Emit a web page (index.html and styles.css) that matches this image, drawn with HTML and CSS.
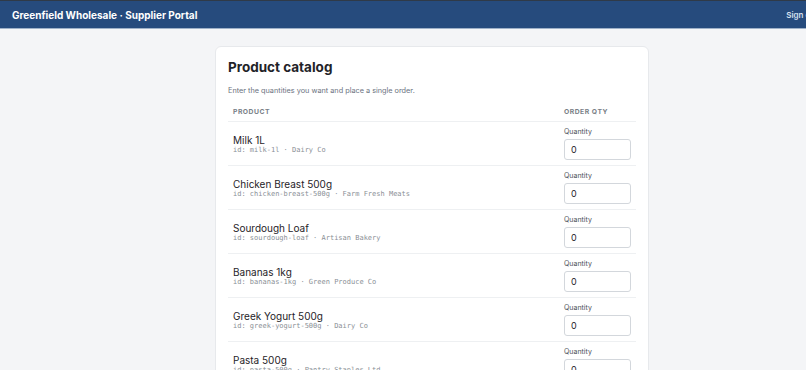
FILE: index.html
```html
<!DOCTYPE html>
<html lang="en">
<head>
  <meta charset="UTF-8">
  <title>Supplier Portal</title>
  <link rel="stylesheet" href="styles.css">
</head>
<body>

  <header class="topbar">
    <div class="topbar-inner">
      <span class="brand">Greenfield Wholesale · Supplier Portal</span>
      <a class="signout" href="#">Sign out</a>
    </div>
  </header>

  <main class="card">
    <h1>Product catalog</h1>
    <p class="hint">Enter the quantities you want and place a single order.</p>

    <table class="catalog">
      <thead>
        <tr>
          <th>Product</th>
          <th class="qty-col">Order qty</th>
        </tr>
      </thead>
      <tbody>
        <tr>
          <td>
            <div class="name">Milk 1L</div>
            <div class="meta">id: milk-1l · Dairy Co</div>
          </td>
          <td class="qty-col">
            <label>Quantity<input type="number" value="0"></label>
          </td>
        </tr>
        <tr>
          <td>
            <div class="name">Chicken Breast 500g</div>
            <div class="meta">id: chicken-breast-500g · Farm Fresh Meats</div>
          </td>
          <td class="qty-col">
            <label>Quantity<input type="number" value="0"></label>
          </td>
        </tr>
        <tr>
          <td>
            <div class="name">Sourdough Loaf</div>
            <div class="meta">id: sourdough-loaf · Artisan Bakery</div>
          </td>
          <td class="qty-col">
            <label>Quantity<input type="number" value="0"></label>
          </td>
        </tr>
        <tr>
          <td>
            <div class="name">Bananas 1kg</div>
            <div class="meta">id: bananas-1kg · Green Produce Co</div>
          </td>
          <td class="qty-col">
            <label>Quantity<input type="number" value="0"></label>
          </td>
        </tr>
        <tr>
          <td>
            <div class="name">Greek Yogurt 500g</div>
            <div class="meta">id: greek-yogurt-500g · Dairy Co</div>
          </td>
          <td class="qty-col">
            <label>Quantity<input type="number" value="0"></label>
          </td>
        </tr>
        <tr>
          <td>
            <div class="name">Pasta 500g</div>
            <div class="meta">id: pasta-500g · Pantry Staples Ltd</div>
          </td>
          <td class="qty-col">
            <label>Quantity<input type="number" value="0"></label>
          </td>
        </tr>
      </tbody>
    </table>
  </main>

</body>
</html>
```

FILE: styles.css
```css
html, body {
  overflow: hidden;
}

body {
  margin: 0;
  font-family: Inter, "Liberation Sans", sans-serif;
  background: #f4f5f7;
  color: #1f2328;
}

.topbar {
  background: #264b7d;
  border-top: 1px solid #2f3a48;
  border-bottom: 1px solid #9fb1c8;
  height: 27px;
  overflow: hidden;
}

.topbar-inner {
  width: 830px;
  height: 27px;
  box-sizing: border-box;
  padding: 0 12px;
  display: flex;
  justify-content: space-between;
  align-items: center;
}

.brand {
  color: #fff;
  font-weight: 700;
  font-size: 10px;
}

.signout {
  color: #d7e1ee;
  font-size: 8px;
  font-weight: 600;
  text-decoration: none;
}

.card {
  width: 408px;
  margin: 17px 0 0 215px;
  padding: 10px 12px 20px;
  background: #fff;
  border: 1px solid #e7e9ec;
  border-radius: 6px;
}

.card h1 {
  margin: 0;
  font-size: 13.5px;
  font-weight: 700;
  line-height: 20px;
}

.hint {
  margin: 9px 0 8px;
  font-size: 7.3px;
  line-height: 9px;
  color: #6b7280;
}

.catalog {
  width: 100%;
  border-collapse: collapse;
}

.catalog th {
  text-align: left;
  font-size: 6.8px;
  font-weight: 700;
  letter-spacing: 0.5px;
  text-transform: uppercase;
  color: #7a7f87;
  padding: 4px 5px 5px;
  border-bottom: 1px solid #eef0f2;
}

.catalog td {
  padding: 6px 5px 5px;
  border-bottom: 1px solid #eef0f2;
  height: 32px;
}

.qty-col {
  width: 67px;
}

.catalog th.qty-col {
  padding-left: 0;
}

.name {
  font-size: 10px;
  line-height: 11px;
  color: #1f2328;
}

.meta {
  font-family: "DejaVu Sans Mono", "Liberation Mono", monospace;
  font-size: 7px;
  color: #8a8f96;
  line-height: 8px;
}

.catalog td.qty-col {
  padding: 4px 4px 5px 0;
  width: 67px;
}

label {
  display: flex;
  flex-direction: column;
  gap: 3px;
  font-size: 7px;
  color: #4b5058;
}

label input {
  width: 67px;
  height: 21px;
  box-sizing: border-box;
  border: 1px solid #d3d7dc;
  border-radius: 3px;
  padding: 0 6px;
  font-family: Inter, "Liberation Sans", sans-serif;
  font-size: 9px;
  color: #1f2328;
  -moz-appearance: textfield;
}

label input::-webkit-outer-spin-button,
label input::-webkit-inner-spin-button {
  -webkit-appearance: none;
  margin: 0;
}
```
